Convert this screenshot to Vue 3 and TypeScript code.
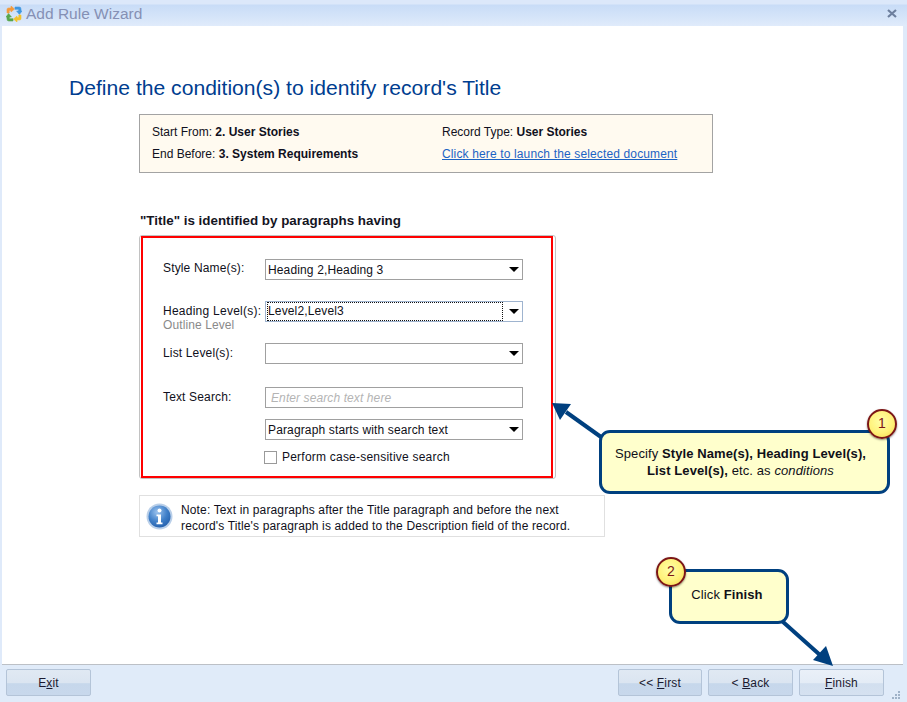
<script setup lang="ts">
interface Field {
  label: string
  hint?: string
  value: string
  focused?: boolean
  cls: string
}
const fields: Field[] = [
  { label: 'Style Name(s):', value: 'Heading 2,Heading 3', cls: 'row-style' },
  { label: 'Heading Level(s):', hint: 'Outline Level', value: 'Level2,Level3', focused: true, cls: 'row-heading' },
  { label: 'List Level(s):', value: '', cls: 'row-list' },
]
</script>

<template>
  <div class="window">
    <header class="titlebar">
      <svg class="logo" viewBox="0 0 16 16" width="16" height="16" aria-hidden="true">
        <path d="M1 7V3.500Q1 2 2.500 2H5V0l3.500 3L5 6V4.400H3.200V7Z" fill="#f39a3c" stroke="#f39a3c" stroke-width="0.6" />
        <path d="M9 1h4.200Q15 1 15 3v2h1l-2.600 3.400L10.600 5H12.600V3.300H9Z" fill="#3f97e0" stroke="#3f97e0" stroke-width="0.6" />
        <path d="M15 9v3.500Q15 14 13.500 14H11v2l-3.500-3L11 10v1.600h1.800V9Z" fill="#f2c22e" stroke="#f2c22e" stroke-width="0.6" />
        <path d="M7 15H2.800Q1 15 1 13v-2H0l2.600-3.400L5.400 11H3.400v1.700H7Z" fill="#57a64a" stroke="#57a64a" stroke-width="0.6" />
      </svg>
      <span class="title">Add Rule Wizard</span>
      <svg class="close" viewBox="0 0 10 9" width="10" height="9" aria-hidden="true">
        <path d="M1 1l8 7M9 1L1 8" stroke="#6d7f9e" stroke-width="2.200" fill="none" />
      </svg>
    </header>

    <main class="content">
      <h1 class="heading">Define the condition(s) to identify record's Title</h1>

      <div class="panel">
        <section class="summary">
          <div class="summary-col">
            <p>Start From: <b>2. User Stories</b></p>
            <p>End Before: <b>3. System Requirements</b></p>
          </div>
          <div class="summary-col">
            <p>Record Type: <b>User Stories</b></p>
            <p><a class="link">Click here to launch the selected document</a></p>
          </div>
        </section>

        <h2 class="subheading">"Title" is identified by paragraphs having</h2>

        <section class="frame">
          <div class="redframe">
            <div v-for="f in fields" :key="f.label" class="row" :class="f.cls">
              <div class="label">
                {{ f.label }}
                <span v-if="f.hint" class="hint">{{ f.hint }}</span>
              </div>
              <div class="combo" :class="{ focused: f.focused }">
                <span class="combo-text">{{ f.value }}</span>
                <i class="caret"></i>
              </div>
            </div>

            <div class="row row-search">
              <div class="label">Text Search:</div>
              <input class="search" type="text" placeholder="Enter search text here" />
            </div>
            <div class="row row-mode">
              <div class="label"></div>
              <div class="combo">
                <span class="combo-text">Paragraph starts with search text</span>
                <i class="caret"></i>
              </div>
            </div>
            <div class="row row-check">
              <div class="label"></div>
              <label class="check"><i class="box"></i>Perform case-sensitive search</label>
            </div>
          </div>
        </section>

        <section class="note">
          <svg class="info" viewBox="0 0 27 27" width="27" height="27" aria-hidden="true">
            <defs>
              <radialGradient id="ig" cx="0.4" cy="0.3" r="0.8">
                <stop offset="0" stop-color="#9cc3ee" />
                <stop offset="0.55" stop-color="#3f7fc8" />
                <stop offset="1" stop-color="#1f5aa8" />
              </radialGradient>
            </defs>
            <circle cx="13.500" cy="13.500" r="13" fill="#b9cfe9" />
            <circle cx="13.500" cy="13.500" r="11" fill="url(#ig)" />
            <circle cx="13.500" cy="7.500" r="2" fill="#fff" />
            <path d="M10.500 11.500h4.500v8h1.500v1.800h-6v-1.800h1.500v-6.200h-1.500Z" fill="#fff" />
          </svg>
          <p>Note: Text in paragraphs after the Title paragraph and before the next<br />record's Title's paragraph is added to the Description field of the record.</p>
        </section>
      </div>
    </main>

    <footer class="footer">
      <button class="btn">E<u>x</u>it</button>
      <div class="spacer"></div>
      <button class="btn first">&lt;&lt; <u>F</u>irst</button>
      <button class="btn">&lt; <u>B</u>ack</button>
      <button class="btn primary"><u>F</u>inish</button>
      <svg class="grip" viewBox="0 0 10 10" width="10" height="10" aria-hidden="true">
        <g fill="#9fb2c8">
          <rect x="7" y="1" width="2" height="2" />
          <rect x="4" y="4" width="2" height="2" />
          <rect x="7" y="4" width="2" height="2" />
          <rect x="1" y="7" width="2" height="2" />
          <rect x="4" y="7" width="2" height="2" />
          <rect x="7" y="7" width="2" height="2" />
        </g>
      </svg>
    </footer>

    <svg class="arrows" width="907" height="702" viewBox="0 0 907 702" aria-hidden="true">
      <path d="M601 437L566 412" stroke="#00407f" stroke-width="4" fill="none" />
      <path d="M552 403L571 404L560 420Z" fill="#00407f" />
      <path d="M782 621L820 655" stroke="#00407f" stroke-width="4" fill="none" />
      <path d="M833 666L813 660L826 646Z" fill="#00407f" />
    </svg>

    <aside class="callout callout-one">
      <p>Specify <b>Style Name(s), Heading Level(s),<br />List Level(s),</b> etc. as <i>conditions</i></p>
      <span class="badge badge-one">1</span>
    </aside>
    <aside class="callout callout-two">
      <p>Click <b>Finish</b></p>
      <span class="badge badge-two">2</span>
    </aside>
  </div>
</template>

<style>
html, body { margin: 0; padding: 0; background: #e0ebf9; }
</style>

<style scoped>
.window {
  position: relative;
  width: 907px;
  height: 702px;
  overflow: hidden;
  display: flex;
  flex-direction: column;
  font-family: "Liberation Sans", Arial, sans-serif;
  font-size: 12px;
  color: #101020;
  background: #dfeafa;
}
.titlebar {
  height: 26px;
  flex: none;
  box-sizing: border-box;
  display: flex;
  align-items: center;
  padding: 1px 10px 0 6px;
  background: linear-gradient(#dce8fa 0, #dce8fa 4px, #c8dcf7 5px, #d6e5f9 18px, #e0ebfb 26px);
}
.logo { flex: none; }
.title {
  margin-left: 4px;
  font-size: 15.500px;
  color: #8590b4;
  flex: 1;
}
.close { flex: none; }
.content {
  flex: 1;
  margin: 0 4px 0 2px;
  background: #fff;
  border-bottom: 1px solid #bcc0c6;
  padding: 50px 0 0 67px;
  min-height: 0;
}
.heading {
  margin: 0;
  font-size: 21.120px;
  line-height: 24px;
  font-weight: 400;
  color: #003d8f;
}
.panel { margin-left: 70px; }
.summary {
  margin-top: 14px;
  width: 574px;
  height: 59px;
  box-sizing: border-box;
  border: 1px solid #a3a3a3;
  background: #fffaf0;
  display: flex;
  padding: 6px 12px;
}
.summary-col { flex: none; width: 290px; }
.summary-col + .summary-col { width: 258px; }
.summary p {
  margin: 0;
  height: 22px;
  line-height: 22px;
}
.link { color: #1c63c4; text-decoration: underline; letter-spacing: 0.14px; }
.subheading {
  margin: 39px 0 0;
  padding-left: 1px;
  font-size: 13.400px;
  line-height: 18px;
  font-weight: 700;
  color: #15151f;
}
.frame {
  margin-top: 5px;
  width: 417px;
  height: 244px;
  box-sizing: border-box;
  border: 1px solid #c2c2c2;
  border-radius: 3px;
  padding: 0 0 0 1px;
}
.redframe {
  box-sizing: border-box;
  height: 242px;
  width: 412px;
  border: 2px solid #f00;
  padding-left: 20px;
}
.row { display: flex; align-items: flex-start; }
.label {
  width: 102px;
  flex: none;
  line-height: 16px;
  letter-spacing: 0.15px;
}
.row-heading .label { letter-spacing: 0.25px; }
.hint { display: block; color: #8a8a8a; line-height: 13px; letter-spacing: 0.1px; }
.row-style { margin-top: 21px; }
.row-style .label { padding-top: 1px; }
.row-heading { margin-top: 21px; height: 42px; }
.row-heading .label { padding-top: 2px; }
.row-list { margin-top: 0; }
.row-list .label { padding-top: 2px; }
.row-search { margin-top: 23px; }
.row-search .label { padding-top: 2px; }
.row-mode { margin-top: 11px; }
.row-check { margin-top: 10px; }
.combo {
  width: 258px;
  height: 21px;
  box-sizing: border-box;
  border: 1px solid #a0a0a0;
  position: relative;
  display: flex;
  align-items: center;
  padding-left: 2px;
  background: #fff;
}
.combo-text {
  line-height: 15px;
  letter-spacing: 0.14px;
  color: #101018;
  padding-top: 1px;
}
.combo.focused { border-color: #9fb4cf; }
.combo.focused .combo-text {
  width: 236px;
  height: 19px;
  box-sizing: border-box;
  outline: 1px dotted #111;
  outline-offset: -1px;
  line-height: 17px;
  padding: 1px 0 0 1px;
  margin-left: -1px;
}
.caret {
  position: absolute;
  right: 3px;
  top: 7px;
  width: 0;
  height: 0;
  border-left: 5px solid transparent;
  border-right: 5px solid transparent;
  border-top: 5px solid #000;
}
.search {
  width: 258px;
  height: 21px;
  box-sizing: border-box;
  border: 1px solid #a0a0a0;
  padding: 0 5px;
  margin: 0;
  outline: none;
  font: italic 12px "Liberation Sans", Arial, sans-serif;
  letter-spacing: 0.1px;
  background: #fff;
}
.search::placeholder { color: #b4b4b4; opacity: 1; }
.check {
  display: flex;
  align-items: center;
  letter-spacing: 0.22px;
  line-height: 14px;
  margin-left: -1px;
}
.box {
  width: 13px;
  height: 13px;
  box-sizing: border-box;
  border: 1px solid #9a9a9a;
  margin-right: 5px;
}
.note {
  margin-top: 16px;
  width: 466px;
  height: 42px;
  box-sizing: border-box;
  border: 1px solid #e0e0e0;
  display: flex;
  align-items: center;
  padding-left: 6px;
}
.info { flex: none; margin-right: 8px; }
.note p {
  margin: 0;
  line-height: 16px;
  letter-spacing: 0.14px;
  padding-top: 3px;
}
.footer {
  flex: none;
  height: 37px;
  box-sizing: border-box;
  padding: 4px 0 0 6px;
  display: flex;
  align-items: flex-start;
  gap: 6px;
  position: relative;
  background: #e0ebf9;
}
.spacer { flex: 1; }
.btn {
  width: 85px;
  height: 27px;
  box-sizing: border-box;
  border: 1px solid #b4c4d8;
  border-radius: 2px;
  padding: 0;
  font: 12px "Liberation Sans", Arial, sans-serif;
  letter-spacing: 0.15px;
  color: #1a1a30;
  background: linear-gradient(#e0e9f3 0, #dbe5f1 50%, #c6d7eb 55%, #c8d8ec 100%);
}
.btn.first { width: 84px; }
.btn.primary {
  background: linear-gradient(#eaf0f8 0, #e4ecf6 50%, #d2dfef 55%, #d5e1f0 100%);
  margin-right: 23px;
}
.grip { position: absolute; right: 6px; bottom: 2px; }
.arrows { position: absolute; left: 0; top: 0; pointer-events: none; }
.callout {
  position: absolute;
  box-sizing: border-box;
  border: 3px solid #00407f;
  border-radius: 11px;
  background: #ffffcc;
  color: #101018;
  text-align: center;
  display: flex;
  align-items: center;
  justify-content: center;
}
.callout p { margin: 0; font-size: 13px; line-height: 17px; letter-spacing: 0.1px; }
.callout-one { left: 599px; top: 430px; width: 291px; height: 64px; padding-right: 8px; }
.callout-two { left: 669px; top: 569px; width: 120px; height: 55px; padding: 0 4px 4px 0; }
.badge {
  position: absolute;
  width: 30px;
  height: 30px;
  box-sizing: border-box;
  border: 2px solid #7b1616;
  border-radius: 50%;
  background: radial-gradient(circle at 45% 40%, #ffffa8 0, #fff27a 55%, #f4d44a 100%);
  color: #7b1616;
  font-size: 14px;
  line-height: 25px;
  text-align: center;
  box-shadow: 0 1px 2px rgba(0, 0, 0, 0.45);
}
.badge-one { left: 265px; top: -24px; }
.badge-two { left: -16px; top: -15px; }
</style>
